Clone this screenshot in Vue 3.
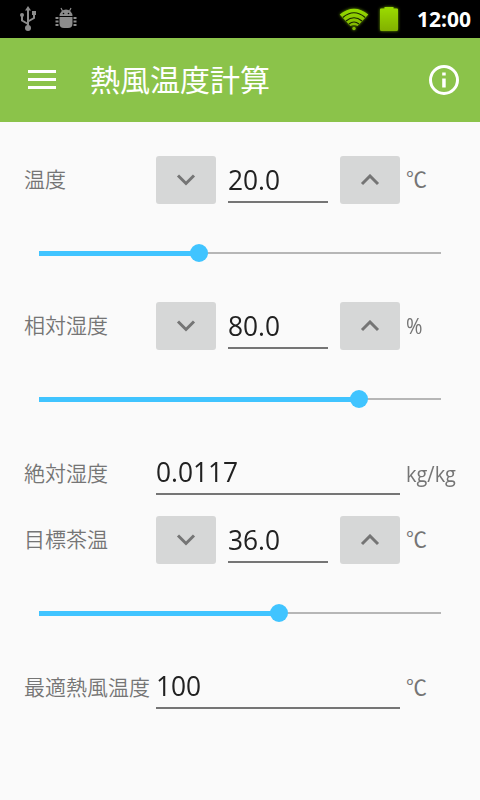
<script setup>
import { reactive } from 'vue';

const rows = reactive([
  { id: 'temp', label: '温度', value: '20.0', unit: '℃', percent: 40, adjustable: true },
  { id: 'rh', label: '相対湿度', value: '80.0', unit: '%', percent: 80, adjustable: true },
  { id: 'ah', label: '絶対湿度', value: '0.0117', unit: 'kg/kg', adjustable: false },
  { id: 'tea', label: '目標茶温', value: '36.0', unit: '℃', percent: 60, adjustable: true },
  { id: 'result', label: '最適熱風温度', value: '100', unit: '℃', adjustable: false }
]);

function step(row, delta) {
  row.value = (Number(row.value) + delta).toFixed(1);
}
</script>

<template>
  <div class="screen">
    <div class="status-bar">
      <svg class="usb" width="18" height="26" viewBox="0 0 18 26" fill="none" stroke="#8c8c8c" stroke-width="2">
        <path d="M9 3v18M9 18L3 14.500V9M9 15.500l6-3.500V8" />
        <path d="M9 0l3 4.500H6z" fill="#8c8c8c" stroke="none" />
        <circle cx="3" cy="9" r="2" fill="#8c8c8c" stroke="none" />
        <path d="M13 5h4v4h-4z" fill="#8c8c8c" stroke="none" />
        <circle cx="9" cy="22" r="3" fill="#8c8c8c" stroke="none" />
      </svg>
      <svg class="bug" width="22" height="22" viewBox="0 0 22 22" fill="#8c8c8c">
        <path d="M4.500 9a6.500 6.500 0 0 1 13 0z" />
        <path d="M7.500 4L6 1M14.500 4L16 1" stroke="#8c8c8c" stroke-width="1.200" />
        <path d="M4.500 10h13v6.500q0 4.500-4.500 4.500H9q-4.500 0-4.500-4.500z" />
        <path d="M3.500 11H.5M3.500 14.500H.5M3.500 18H.5M18.500 11h3M18.500 14.500h3M18.500 18h3" stroke="#8c8c8c" stroke-width="1.800" />
        <circle cx="8.500" cy="6.500" r=".8" fill="#000" />
        <circle cx="13.500" cy="6.500" r=".8" fill="#000" />
      </svg>
      <svg class="wifi" width="30" height="24" viewBox="0 0 30 24">
        <defs>
          <linearGradient id="wifiFill" x1="0" y1="0" x2="0" y2="1">
            <stop offset="0" stop-color="#95dc00" />
            <stop offset="1" stop-color="#83b800" />
          </linearGradient>
        </defs>
        <path d="M.7 7.500Q15-4 29.300 7.500L18.500 19q-3.500-2-7 0z" fill="url(#wifiFill)" />
        <path d="M3.800 10.500Q15 1 26.200 10.500M7 14q8-6.500 16 0M10 17q5-4 10 0" fill="none" stroke="#182500" stroke-width="1.200" />
        <circle cx="15" cy="21.500" r="1.700" fill="#83b800" />
      </svg>
      <svg class="battery" width="18" height="24" viewBox="0 0 18 24">
        <defs>
          <linearGradient id="batteryFill" x1="0" y1="0" x2="0" y2="1">
            <stop offset="0" stop-color="#9bdc00" />
            <stop offset="1" stop-color="#82b000" />
          </linearGradient>
        </defs>
        <path d="M4.500 0h9v1.500H17q1 0 1 1V22.500q0 1.500-1.500 1.500h-15Q0 24 0 22.500v-20q0-1 1-1h3.500z" fill="url(#batteryFill)" />
      </svg>
      <span class="clock">12:00</span>
    </div>

    <header class="toolbar">
      <svg class="menu" width="28" height="20" viewBox="0 0 28 20" fill="#fff">
        <path d="M0 0h28v3H0zM0 8h28v3H0zM0 16h28v3H0z" />
      </svg>
      <h1 class="title">熱風温度計算</h1>
      <svg class="info" width="30" height="30" viewBox="0 0 30 30">
        <circle cx="15" cy="15" r="13.500" fill="none" stroke="#fff" stroke-width="3" />
        <path d="M13.200 7.500h3.500v3h-3.500zM13.200 13.500h3.500v9h-3.500z" fill="#fff" />
      </svg>
    </header>

    <main class="content">
      <section v-for="row in rows" :key="row.id" class="item" :class="{ readonly: !row.adjustable }">
        <div class="row">
          <span class="label">{{ row.label }}</span>
          <button v-if="row.adjustable" class="btn" @click="step(row, -1)">
            <svg width="20" height="12" viewBox="0 0 20 12">
              <path d="M2 1.500l8 8 8-8" fill="none" stroke="#757575" stroke-width="3" />
            </svg>
          </button>
          <div class="field"><span class="value">{{ row.value }}</span></div>
          <button v-if="row.adjustable" class="btn up" @click="step(row, 1)">
            <svg width="20" height="12" viewBox="0 0 20 12">
              <path d="M2 10l8-8 8 8" fill="none" stroke="#757575" stroke-width="3" />
            </svg>
          </button>
          <span class="unit" :class="{ celsius: row.unit === '℃' }">{{ row.unit }}</span>
        </div>
        <div v-if="row.adjustable" class="slider">
          <div class="done" :style="{ width: row.percent + '%' }"></div>
          <div class="thumb"></div>
          <div class="rest"></div>
        </div>
      </section>
    </main>
  </div>
</template>

<style>
body {
  margin: 0;
  background-color: #fafafa;
}
</style>

<style scoped>
.screen {
  width: 480px;
  height: 800px;
  overflow: hidden;
  background-color: #fafafa;
  font-family: "Open Sans", "Noto Sans CJK JP", sans-serif;
}

.status-bar {
  display: flex;
  align-items: center;
  box-sizing: border-box;
  height: 38px;
  padding: 0 9px 0 19px;
  background-color: #000;
}

.bug {
  margin-left: 18px;
  margin-top: -2px;
}

.wifi {
  margin-left: auto;
  filter: drop-shadow(0 0 1.5px #6fa500);
}

.battery {
  margin-left: 8px;
  filter: drop-shadow(0 0 1.5px #6fa500);
}

.wifi,
.battery {
  margin-right: 3px;
}

.clock {
  margin-left: 16px;
  font-size: 21px;
  font-weight: 700;
  color: #fff;
}

.toolbar {
  display: flex;
  align-items: center;
  box-sizing: border-box;
  height: 84px;
  padding: 0 21px 0 28px;
  background-color: #8bc34a;
}

.title {
  flex: 1;
  margin: -5px 0 0 34px;
  font-family: "Noto Sans CJK JP", sans-serif;
  font-size: 30px;
  font-weight: 400;
  line-height: 40px;
  color: #fff;
}

.content {
  padding-top: 34px;
}

.item.readonly {
  height: 68px;
}

.row {
  display: flex;
  align-items: center;
  height: 48px;
  padding-left: 24px;
}

.label {
  width: 132px;
  margin-top: -4px;
  font-family: "Noto Sans CJK JP", sans-serif;
  font-size: 21px;
  font-weight: 350;
  line-height: 30px;
  white-space: nowrap;
  color: #757575;
}

.btn {
  display: flex;
  align-items: center;
  justify-content: center;
  width: 60px;
  height: 48px;
  padding: 0;
  border: none;
  border-radius: 3px;
  background-color: #d6d7d7;
}

.field {
  box-sizing: border-box;
  align-self: flex-start;
  width: 100px;
  height: 47px;
  margin: 0 12px;
  border-bottom: 2px solid #757575;
}

.readonly .field {
  width: 244px;
  margin: 0;
}

.value {
  display: inline-block;
  font-size: 28px;
  line-height: 46px;
  color: #212121;
  transform: scaleX(0.94);
  transform-origin: left;
}

.unit {
  margin-left: 6px;
  font-size: 21px;
  line-height: 30px;
  color: #757575;
  transform: scaleX(0.95);
  transform-origin: left;
}

.unit.celsius {
  font-family: "Liberation Sans", "Noto Sans CJK JP", sans-serif;
  font-weight: 400;
  transform: none;
}

.readonly .label {
  margin-top: 0;
}

.readonly .unit {
  margin-top: 4px;
}

.slider {
  display: flex;
  align-items: center;
  height: 98px;
  padding: 0 41px 0 39px;
}

.done {
  height: 5px;
  background-color: #40c4ff;
}

.thumb {
  flex: none;
  width: 18px;
  height: 18px;
  margin: 0 -9px;
  border-radius: 50%;
  background-color: #40c4ff;
  z-index: 1;
}

.rest {
  flex: 1;
  height: 2px;
  margin-right: -2px;
  background-color: #b6b6b6;
}
</style>
